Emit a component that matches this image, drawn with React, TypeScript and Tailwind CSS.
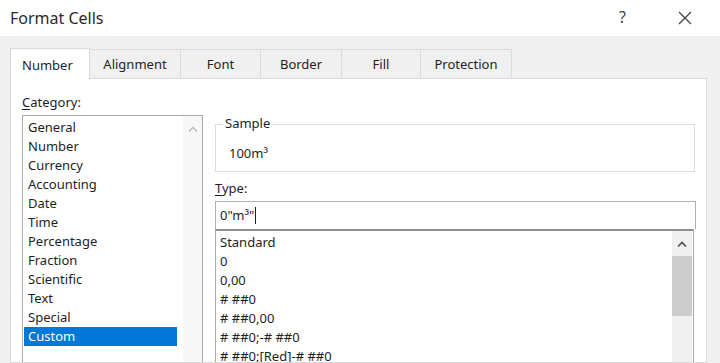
import React from "react";

const categories = [
  "General",
  "Number",
  "Currency",
  "Accounting",
  "Date",
  "Time",
  "Percentage",
  "Fraction",
  "Scientific",
  "Text",
  "Special",
  "Custom",
];

const formats = [
  "Standard",
  "0",
  "0,00",
  "# ##0",
  "# ##0,00",
  "# ##0;-# ##0",
  "# ##0;[Red]-# ##0",
  "# ##0,00;-# ##0,00",
];

const tabs = [
  { label: "Number", w: "w-[80px]" },
  { label: "Alignment", w: "w-[91px]" },
  { label: "Font", w: "w-[80px]" },
  { label: "Border", w: "w-[81px]" },
  { label: "Fill", w: "w-[79px]" },
  { label: "Protection", w: "w-[91px]" },
];

function UpArrow({ className }: { className?: string }) {
  return (
    <svg width="10" height="6" viewBox="0 0 10 6" className={className}>
      <path d="M1 5.5 L5 1.5 L9 5.5" fill="none" stroke="currentColor" strokeWidth="1.6" />
    </svg>
  );
}

export default function App() {
  return (
    <div
      className="w-[720px] h-[363px] overflow-hidden bg-[#f0f0f0] flex flex-col text-[#1e1e1e]"
      style={{ fontFamily: '"Noto Sans", "Open Sans", sans-serif' }}
    >
      {/* title bar */}
      <div className="h-[36px] shrink-0 bg-white flex items-center pl-[10px]">
        <span className="text-[16px] text-[#2b2b2b] leading-none">Format Cells</span>
        <span className="ml-auto text-[16px] text-[#444] leading-none mr-[52px] mt-[-2px]">?</span>
        <svg width="14" height="14" viewBox="0 0 14 14" className="mr-[28px] text-[#444]">
          <path d="M1 1 L13 13 M13 1 L1 13" stroke="currentColor" strokeWidth="1.3" />
        </svg>
      </div>

      {/* body */}
      <div className="flex-1 flex flex-col pt-[12px] pl-[10px] pr-[13px] min-h-0">
        {/* tabs */}
        <div className="flex h-[30px] shrink-0 relative z-10">
          {tabs.map((t, i) =>
            i === 0 ? (
              <div
                key={t.label}
                className={`${t.w} h-[31px] bg-white border border-b-0 border-[#d9d9d9] flex items-center pl-[11px] pt-[3px] text-[13px]`}
              >
                {t.label}
              </div>
            ) : (
              <div
                key={t.label}
                className={`${t.w} h-[29px] mt-[1px] border-t border-r border-[#dadada] bg-[#f0f0f0] flex items-center justify-center pt-[2px] text-[13px]`}
              >
                {t.label}
              </div>
            )
          )}
        </div>

        {/* panel */}
        <div className="flex-1 bg-white border border-[#d9d9d9] flex min-h-0 overflow-hidden">
          {/* category column */}
          <div className="pl-[11px] pt-[15px] flex flex-col shrink-0">
            <div className="text-[13px] h-[21px] leading-[17px] shrink-0">
              <span className="underline underline-offset-2">C</span>ategory:
            </div>
            <div className="w-[181px] h-[300px] shrink-0 border border-[#a9a9a9] flex">
              <div className="flex-1 pt-[2px] pl-[1px]">
                {categories.map((c) => (
                  <div
                    key={c}
                    className={`h-[19px] leading-[19px] text-[13px] pl-[4px] w-[153px] ${
                      c === "Custom" ? "bg-[#0078d7] text-white" : ""
                    }`}
                  >
                    {c}
                  </div>
                ))}
              </div>
              <div className="w-[19px] bg-[#f7f7f7] flex justify-center pt-[10px]">
                <UpArrow className="text-[#c2c2c2]" />
              </div>
            </div>
          </div>

          {/* right column */}
          <div className="pl-[12px] pt-[45px] flex flex-col w-[494px] shrink-0">
            <div className="relative w-[480px] h-[48px] shrink-0 border border-[#dcdcdc] pl-[13px] pt-[20px]">
              <span className="absolute left-[7px] top-[-10px] bg-white px-[2px] text-[13px] leading-[17px]">
                Sample
              </span>
              <div className="text-[13px] leading-[17px]">100m³</div>
            </div>

            <div className="text-[13px] mt-[8px] h-[21px] leading-[17px] shrink-0">
              <span className="underline underline-offset-2">T</span>ype:
            </div>
            <div className="w-[481px] h-[28px] shrink-0 border border-[#b0b0b0] border-b-0 flex items-center pl-[4px] text-[13px]">
              <span>0"m³"</span>
              <span className="w-px h-[17px] bg-[#1e1e1e] ml-[1px]" />
            </div>
            <div className="w-[479px] h-[200px] shrink-0 border border-[#a9a9a9] border-t-2 border-t-[#8f8f8f] flex">
              <div className="flex-1 pt-[2px] pl-[4px]">
                {formats.map((f) => (
                  <div key={f} className="h-[19px] leading-[19px] text-[13px]">
                    {f}
                  </div>
                ))}
              </div>
              <div className="w-[20px] bg-[#f0f0f0] flex flex-col items-center mr-[1px]">
                <div className="h-[25px] flex items-center justify-center">
                  <UpArrow className="text-[#505050]" />
                </div>
                <div className="w-[20px] h-[60px] bg-[#cdcdcd]" />
              </div>
            </div>
          </div>
        </div>
      </div>
    </div>
  );
}
